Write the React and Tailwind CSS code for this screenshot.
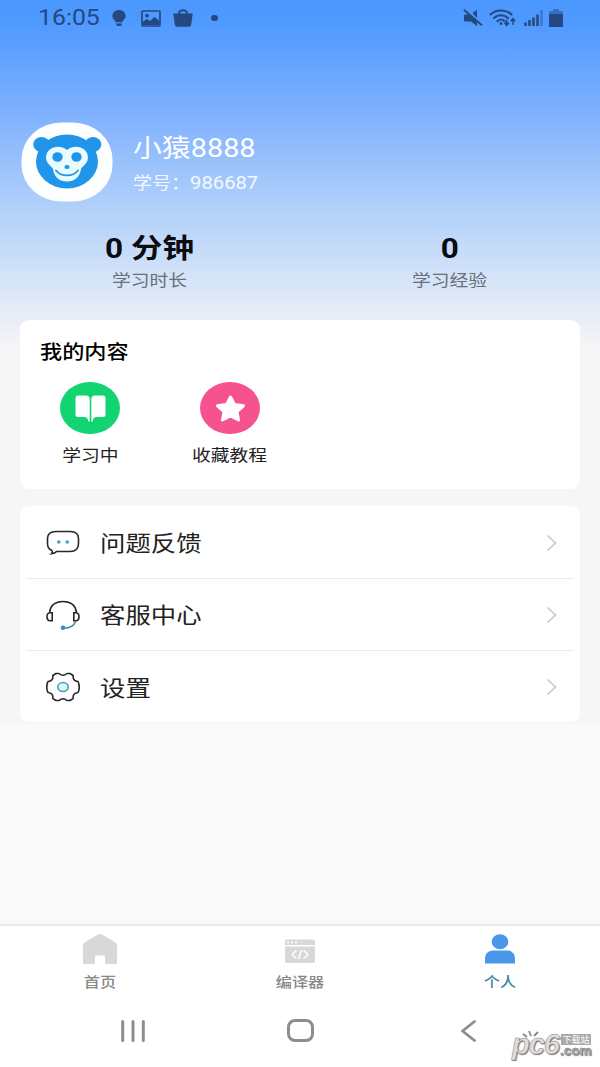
import { useState } from 'react'

const tabs = [
  { id: 'home', label: '首页', Icon: HomeIcon },
  { id: 'editor', label: '编译器', Icon: EditorIcon },
  { id: 'me', label: '个人', Icon: PersonIcon },
]

const stats = [
  { value: '0 分钟', label: '学习时长' },
  { value: '0', label: '学习经验' },
]

const menu = [
  { label: '问题反馈', Icon: ChatIcon },
  { label: '客服中心', Icon: HeadsetIcon },
  { label: '设置', Icon: GearIcon },
]

function StatusBar() {
  return (
    <div className="flex h-9 items-center justify-between pl-[38px] pr-[37px] text-[#24487f]">
      <div className="flex items-center">
        <span className="w-[74px] origin-left scale-x-[1.154] whitespace-nowrap text-[21.500px] leading-none">16:05</span>
        <svg className="h-[17px] w-[14px]" viewBox="0 0 14 17" fill="currentColor">
          <path d="M7 0C3.100 0 .4 2.700.4 6c0 2.300 1.500 3.700 2.900 5v1.300h7.400V11c1.400-1.300 2.900-2.700 2.900-5 0-3.300-2.700-6-6.600-6zM4 13.400h6v.8L8.600 16H5.400L4 14.200z" />
        </svg>
        <svg className="ml-[15px] h-[17px] w-[20px]" viewBox="0 0 20 17">
          <rect x="1" y="1" width="18" height="15" rx="1" fill="none" stroke="currentColor" strokeWidth="1.700" />
          <circle cx="6" cy="5.600" r="1.900" fill="currentColor" />
          <path d="M2 14v-2.500L6 9l3 2 4.500-4L18 10.500V15H2z" fill="currentColor" />
        </svg>
        <svg className="ml-[12px] h-[18px] w-[20px]" viewBox="0 0 20 18">
          <path d="M6 5.500V4a4 2.800 0 0 1 8 0v1.500" fill="none" stroke="currentColor" strokeWidth="2" />
          <path d="M.3 4.500h19.400l-1.500 11a2.500 2.500 0 0 1-2.500 2.200H4.300a2.500 2.500 0 0 1-2.500-2.200z" fill="currentColor" />
        </svg>
        <span className="ml-[18px] h-[6px] w-[7px] rounded-full bg-[#24487f]" />
      </div>
      <div className="flex items-center">
        <svg className="h-[18px] w-[20px]" viewBox="0 0 20 18">
          <path d="M1 6.500Q1 5.500 2 5.500h3.500L14 13v4.200L8 12.500H2q-1 0-1-1zM9.500 4.200 14 .8V9z" fill="currentColor" />
          <path d="M2.500 .3 19.500 14.800" stroke="#5b9ffc" strokeWidth="1" />
          <path d="M1.500 1.300 18.300 15.800" stroke="currentColor" strokeWidth="2" strokeLinecap="round" />
        </svg>
        <svg className="ml-[6px] h-[18px] w-[27px]" viewBox="0 0 27 18" fill="none" stroke="currentColor" strokeWidth="2.100">
          <path d="M1.500 5.500c5.500-5.400 15.500-5.400 21 0M5 9c4-3.700 10-3.700 14 0M8.500 12.200c2-2 5-2 7 0" strokeLinecap="round" />
          <circle cx="12" cy="14.500" r="1.500" fill="currentColor" stroke="none" />
          <path d="M17.700 10.500v6M15.500 13.800l2.200 2.500 2.200-2.500M24 16v-6M21.800 12.200 24 9.700l2.200 2.500" strokeWidth="1.500" />
        </svg>
        <svg className="ml-[8px] h-[16px] w-[19px]" viewBox="0 0 19 16" strokeWidth="2.500" stroke="currentColor">
          <path d="M1.500 12.500V16M5.500 10v6M9.500 7.500V16M13.500 4.500V16" />
          <path d="M17.500 0v16" strokeOpacity=".4" />
        </svg>
        <svg className="ml-[6px] h-[18px] w-[14px]" viewBox="0 0 14 18" fill="currentColor">
          <path d="M4 0h6v2h4v4H0V2h4z" opacity=".5" />
          <path d="M0 5h14v12.200q0 .8-.8.8H.8Q0 18 0 17.200z" />
        </svg>
      </div>
    </div>
  )
}

function Avatar() {
  return (
    <svg className="h-[80px] w-[92px] shrink-0" viewBox="0 0 92 80">
      <rect x=".5" y=".5" width="91" height="79" rx="40" ry="37" fill="#fdffff" />
      <g fill="#2095e9">
        <ellipse cx="20.500" cy="22.500" rx="8.300" ry="7.500" />
        <ellipse cx="72" cy="22.500" rx="8.300" ry="7.500" />
        <ellipse cx="46" cy="39.500" rx="31" ry="27" />
      </g>
      <path d="M46 28C41 24 36 24.500 32.500 25.500C26 28 24.500 33 25.300 37.500C26.200 42 30 43.500 32 47C33 55 38.500 59.500 46 59.500S59 55 60 47C62 43.500 65.800 42 66.700 37.500C67.500 33 66 28 59.500 25.500C56 24.500 51 24 46 28z" fill="#e9fcfd" />
      <g fill="#2095e9">
        <ellipse cx="36.500" cy="35" rx="5.200" ry="4.800" />
        <ellipse cx="55.500" cy="35" rx="5.200" ry="4.800" />
        <ellipse cx="46" cy="45" rx="2.600" ry="2" />
      </g>
      <path d="M35 48.500c5 6.500 17 6.500 22 0" fill="none" stroke="#2095e9" strokeWidth="1.800" strokeLinecap="round" />
    </svg>
  )
}

function BookIcon() {
  return (
    <svg className="h-[27px] w-[31px]" viewBox="0 0 31 27" fill="#fff">
      <path d="M3 .5h8q3.700 0 3.700 3.500v22.500h-1.500q0-4.500-4-4.500H3Q.5 22 .5 19.500V3Q.5.5 3 .5zM28 .5h-8q-3.700 0-3.700 3.500v22.500h1.500q0-4.500 4-4.500H28q2.500 0 2.500-2.500V3Q30.500.5 28 .5z" />
    </svg>
  )
}

function StarIcon() {
  return (
    <svg className="h-[27px] w-[31px]" viewBox="0 0 31 27">
      <path d="M15.500 2 19.400 9.500 28.500 10.800 22 16.500 23.500 25 15.500 21 7.500 25 9 16.500 2.500 10.800 11.600 9.500z" fill="#fff" stroke="#fff" strokeWidth="3" strokeLinejoin="round" />
    </svg>
  )
}

function ChatIcon() {
  return (
    <svg className="h-[30px] w-[34px]" viewBox="0 0 34 30" fill="none">
      <path d="M10 3.500h14c6 0 8.500 2.500 8.500 7v5c0 5-2.500 8-8.500 8H10.500q-1.500 2-5 2.300Q7 24.500 6 22.500C3 21.500 1.500 19 1.500 15.500v-5c0-4.500 2.500-7 8.500-7z" stroke="#26282b" strokeWidth="1.600" />
      <circle cx="12.800" cy="14" r="1.800" fill="#4b9cc4" />
      <circle cx="21.200" cy="14" r="1.800" fill="#4b9cc4" />
    </svg>
  )
}

function HeadsetIcon() {
  return (
    <svg className="h-[30px] w-[34px]" viewBox="0 0 34 30" fill="none" stroke="#26282b" strokeWidth="1.600">
      <path d="M3.500 12.500C4.500 5 10 1.500 17 1.500S29.500 5 30.500 12.500M6.200 12.800H4q-3 .2-3 4t3 4h2.200zM27.800 12.800H30q3 .2 3 4t-3 4h-2.200z" />
      <path d="M29.500 21.500c-1.500 4.500-5 6.500-11.500 6.800" stroke="#4389b5" />
      <circle cx="17" cy="27.700" r="2.300" fill="#4389b5" stroke="none" />
    </svg>
  )
}

function GearIcon() {
  return (
    <svg className="h-[30px] w-[34px]" viewBox="0 0 34 30" fill="none">
      <path d="M10 1.500 13 1.500Q17 5 21 1.500L24 1.500 27.200 3.500Q26.500 9 32 9.500Q34.500 15 32 20.500Q26.500 21 27.200 26.500L24 28.500H21Q17 25 13 28.500H10L6.800 26.500Q7.500 21 2 20.500Q-.5 15 2 9.500Q7.500 9 6.800 3.500z" stroke="#26282b" strokeWidth="1.600" strokeLinejoin="round" />
      <ellipse cx="17" cy="15" rx="5.200" ry="4.500" fill="#dcfcfb" stroke="#459fac" strokeWidth="1.600" />
    </svg>
  )
}

function HomeIcon() {
  return (
    <svg className="h-[32px] w-[36px]" viewBox="0 0 36 32" fill="currentColor">
      <path d="M16 1.600q2-1.300 4 0L33.500 9.500Q35 10.500 35 12v17.500q0 1.500-1.500 1.500H23v-8.500H13V31H2.500Q1 31 1 29.500V12q0-1.500 1.500-2.500z" />
    </svg>
  )
}

function EditorIcon() {
  return (
    <svg className="h-[32px] w-[32px]" viewBox="0 0 32 32">
      <path d="M3 6.500h26q2 0 2 2v3.500H1V8.500q0-2 2-2zM1 13.500h30V28q0 2-2 2H3q-2 0-2-2z" fill="currentColor" />
      <path d="M3 9.300h2M7 9.300h2M11 9.300h2" stroke="#fff" strokeWidth="1.800" />
      <path d="M12.500 17.500l-4.500 4 4.500 4M19.500 17.500l4.500 4-4.500 4M17.500 17l-3 9" fill="none" stroke="#fff" strokeWidth="1.600" />
    </svg>
  )
}

function PersonIcon() {
  return (
    <svg className="h-[32px] w-[32px]" viewBox="0 0 32 32" fill="currentColor">
      <ellipse cx="16" cy="8.700" rx="8.300" ry="7.500" />
      <path d="M1 30.500V26c0-5 3-8.500 8-8.500h14c5 0 8 3.500 8 8.500v4.500z" />
    </svg>
  )
}

function Feature({ label, color, children }) {
  return (
    <button className="flex w-[140px] flex-col items-center">
      <span className={`flex h-[52px] w-[60px] items-center justify-center rounded-[50%] ${color}`}>{children}</span>
      <span className="mt-[13px] scale-x-[1.154] whitespace-nowrap text-[16.300px] leading-[17px] text-[#222]">{label}</span>
    </button>
  )
}

function Watermark() {
  return (
    <div className="absolute left-[512px] top-[1030px] flex font-['Liberation_Sans',sans-serif] font-bold text-[#dedede]">
      <span className="w-[49px] text-[29px] italic leading-[28px] tracking-[-1px] [-webkit-text-stroke:0.500px_#838387] [text-shadow:1px_1px_1px_#77777b]">pc6</span>
      <div className="flex flex-col pt-[4px]">
        <span className="flex h-[11px] w-[30px] items-center justify-center overflow-hidden bg-[#a9a9ab] font-['Noto_Sans_CJK_SC',sans-serif] text-[9px] font-normal leading-[11px] text-white">下载站</span>
        <span className="-ml-px text-[13.500px] leading-[12px] text-[#b2b2b5] [-webkit-text-stroke:0.400px_#77777b] [text-shadow:1px_1px_1px_#77777b]">.com</span>
      </div>
      <svg className="absolute left-[9px] top-0 h-[8px] w-[20px]" viewBox="0 0 20 8" fill="none" stroke="#85858a" strokeWidth="1.800">
        <path d="M2 4l4 3M8 1l2 5M17 2l-4 4" />
      </svg>
    </div>
  )
}

export default function App() {
  const [active, setActive] = useState('me')

  return (
    <div className="relative flex h-[1067px] w-[600px] flex-col overflow-hidden bg-[#fafafa] font-[Roboto,'Noto_Sans_CJK_SC',sans-serif]">
      <div className="h-[723px] bg-[#f6f6f6] bg-[linear-gradient(180deg,#4a97ff_0px,#4e99ff_20px,#7db0fe_110px,#b0cffa_205px,#dde8f8_295px,#f6f6f6_350px)]">
        <StatusBar />

        <header className="mt-[86px] flex h-[80px] items-center pl-[21px] text-white">
          <Avatar />
          <div className="ml-[20px] flex flex-col items-start pt-[4px]">
            <span className="origin-left scale-x-[1.154] whitespace-nowrap text-[25px] leading-[30px]">小猿8888</span>
            <span className="mt-[9px] origin-left scale-x-[1.154] whitespace-nowrap text-[16.500px] leading-[20px] text-[#f2f8ff]">
              学号：<span className="text-[17.500px]">986687</span>
            </span>
          </div>
        </header>

        <section className="mt-[31px] flex h-[87px]">
          {stats.map((s) => (
            <div key={s.label} className="flex flex-1 flex-col items-center">
              <span className="scale-x-[1.154] text-[27.300px] font-bold leading-[33px] text-[#0b0c10]">{s.value}</span>
              <span className="mt-[5px] scale-x-[1.154] text-[16.300px] leading-[20px] text-[#687079]">{s.label}</span>
            </div>
          ))}
        </section>

        <section className="mx-5 h-[169px] rounded-[9px] bg-white pt-[22px]">
          <h2 className="ml-5 w-fit origin-left scale-x-[1.154] text-[19.200px] font-medium leading-[22px] text-black">我的内容</h2>
          <div className="mt-[18px] flex">
            <Feature label="学习中" color="bg-[#12d572]"><BookIcon /></Feature>
            <Feature label="收藏教程" color="bg-[#f5528f]"><StarIcon /></Feature>
          </div>
        </section>

        <section className="mx-5 mt-[17px] h-[216px] divide-y divide-[#ececec] rounded-[9px] bg-white px-[6px] pt-px">
          {menu.map(({ label, Icon }) => (
            <button key={label} className="flex h-[72px] w-full items-center pl-5 pr-[17px]">
              <Icon />
              <span className="ml-[20px] origin-left scale-x-[1.154] pt-[3px] text-[22px] leading-none text-[#222]">{label}</span>
              <svg className="ml-auto h-[18px] w-[11px]" viewBox="0 0 11 18" fill="none" stroke="#c9c9c9" strokeWidth="1.600">
                <path d="M1.500 1.500 9.500 9l-8 7.500" />
              </svg>
            </button>
          ))}
        </section>
      </div>

      <nav className="mt-auto flex h-[80px] border-t-2 border-[#e9e9e9] bg-white pt-[7px]">
        {tabs.map(({ id, label, Icon }) => (
          <button
            key={id}
            onClick={() => setActive(id)}
            className={`flex flex-1 flex-col items-center ${active === id ? 'text-[#4b97ec]' : 'text-[#d8d8d8]'}`}
          >
            <Icon />
            <span className={`mt-[8px] scale-x-[1.154] text-[14px] font-medium leading-[18px] ${active === id ? 'text-[#3c86a0]' : 'text-[#888]'}`}>{label}</span>
          </button>
        ))}
      </nav>

      <div className="flex h-[63px] items-center bg-white pb-[10px] pl-[121px] text-[#8d8d8d]">
        <svg className="h-[22px] w-[24px]" viewBox="0 0 24 22" stroke="currentColor" strokeWidth="3" strokeLinecap="round">
          <path d="M1.700 1.500v19M12 1.500v19M22.300 1.500v19" />
        </svg>
        <span className="ml-[142px] h-[23px] w-[27px] rounded-[8px] border-[3px] border-[#8d8d8d]" />
        <svg className="ml-[147px] h-[22px] w-[15px]" viewBox="0 0 15 22" fill="none" stroke="currentColor" strokeWidth="2.800" strokeLinecap="round">
          <path d="M13.500 1.500 1.500 11l12 9.500" />
        </svg>
      </div>
      <Watermark />
    </div>
  )
}
